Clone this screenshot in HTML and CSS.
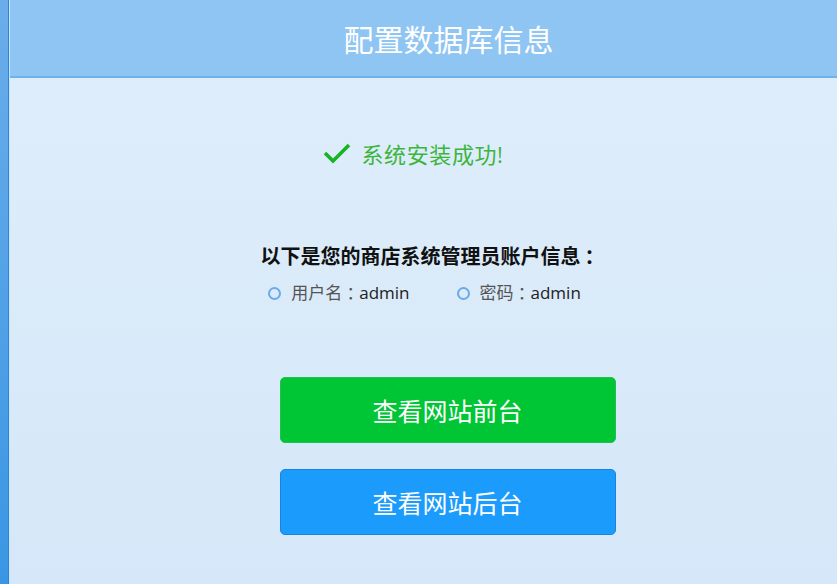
FILE: index.html
```html
<!DOCTYPE html>
<html lang="zh-CN">
<head>
    <meta charset="UTF-8">
    <title>配置数据库信息</title>
    <link rel="stylesheet" href="styles.css">
</head>
<body>
    <div class="sidebar"></div>
    <div class="panel">
        <header class="panel-head">
            <h1>配置数据库信息</h1>
        </header>
        <div class="panel-body">
            <p class="success">
                <svg class="check" width="28" height="22" viewBox="0 0 28 22">
                    <path d="M2 11 L10 19 L26 3" fill="none" stroke="#17b322" stroke-width="3.6"/>
                </svg>
                <span>系统安装成功!</span>
            </p>

            <h2 class="info-title">以下是您的商店系统管理员账户信息<span class="colon">：</span></h2>
            <ul class="account">
                <li><i class="dot"></i>用户名<span class="colon">：</span><b>admin</b></li>
                <li><i class="dot"></i>密码<span class="colon">：</span><b>admin</b></li>
            </ul>

            <div class="actions">
                <a href="#" class="btn btn-green">查看网站前台</a>
                <a href="#" class="btn btn-blue">查看网站后台</a>
            </div>
        </div>
    </div>
</body>
</html>
```

FILE: styles.css
```css
html, body {
    height: 100%;
}
body {
    margin: 0;
    display: flex;
    font-family: "Open Sans", "Noto Sans CJK SC", sans-serif;
    background-color: #dbecfa;
    overflow: hidden;
}
.sidebar {
    width: 8px;
    flex-shrink: 0;
    background: linear-gradient(#6badea, #3a96e3);
    border-right: 1px solid #2a86d8;
}
.panel {
    flex: 1;
    display: flex;
    flex-direction: column;
    border-left: 1px solid #cfe5f9;
    background: linear-gradient(#dfeefb, #d5e7f8);
}
.panel-head {
    height: 76px;
    background-color: #8fc5f2;
    border-bottom: 2px solid #70b2ec;
    display: flex;
    align-items: center;
    justify-content: center;
    padding-left: 50px;
}
.panel-head h1 {
    margin: 0;
    color: #fff;
    font-size: 30px;
    font-weight: normal;
}
.panel-body {
    flex: 1;
    padding-left: 48px;
    display: flex;
    flex-direction: column;
    align-items: center;
}

/* full-width colon, centred like in the original font */
.colon {
    font-family: "Noto Sans CJK TC", sans-serif;
}
.info-title .colon {
    padding-left: 4px;
}

/* success message */
.success {
    margin: 60px 68px 0 0;
    display: flex;
    align-items: center;
    gap: 10px;
    color: #3db53d;
    font-size: 22px;
    height: 30px;
}
.success span {
    letter-spacing: 0.6px;
}

/* account info */
.info-title {
    margin: 75px 30px 0 0;
    font-size: 20px;
    font-weight: bold;
    color: #111;
    line-height: 26px;
}
.account {
    list-style: none;
    padding: 0;
    margin: 12px 46px 0 0;
    display: flex;
    gap: 47px;
    font-size: 17px;
    color: #555;
    line-height: 22px;
}
.account li {
    display: flex;
    align-items: center;
}
.account b {
    font-weight: normal;
    color: #222;
}
.dot {
    width: 9px;
    height: 9px;
    border: 2.5px solid #6aaae6;
    border-radius: 50%;
    margin-right: 10px;
}

/* buttons */
.actions {
    margin-top: 73px;
    display: flex;
    flex-direction: column;
    gap: 26px;
}
.btn {
    width: 334px;
    height: 64px;
    border-radius: 5px;
    display: flex;
    align-items: center;
    justify-content: center;
    color: #fff;
    font-size: 25px;
    text-decoration: none;
}
.btn-green {
    background-color: #00c535;
    border: 1px solid #20c04a;
}
.btn-blue {
    background-color: #1b9bfc;
    border: 1px solid #1585e4;
}
```
